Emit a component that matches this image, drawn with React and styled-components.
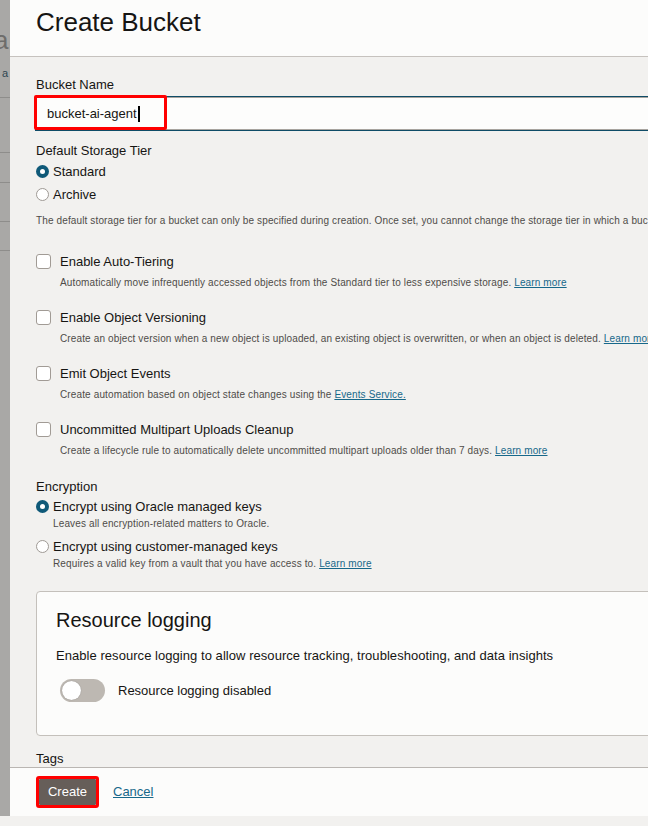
import React from "react";
import styled, { createGlobalStyle } from "styled-components";

const GlobalStyle = createGlobalStyle`
  html, body {
    margin: 0;
    padding: 0;
  }
  body {
    background: #f2f1ef;
    font-family: "Liberation Sans", Arial, sans-serif;
    color: #161513;
  }
`;

const Page = styled.div`
  width: 648px;
  height: 826px;
  overflow: hidden;
  display: flex;
  flex-direction: column;
`;

const Stage = styled.div`
  display: flex;
  height: 816px;
`;

/* page behind the drawer, dimmed by the overlay */
const Backdrop = styled.div`
  width: 10px;
  flex-shrink: 0;
  background: #a9a8a6;
  overflow: hidden;
  display: flex;
  flex-direction: column;
`;

const BackdropTitle = styled.div`
  font-size: 26px;
  line-height: 30px;
  margin: 25px 0 0 -6px;
  color: #6e6d6b;
`;

const BackdropLink = styled.div`
  font-size: 11px;
  line-height: 14px;
  margin: 11px 0 0 2px;
  color: #2f4550;
`;

const BackdropRow = styled.div`
  height: ${(p) => p.h}px;
  border-bottom: 1px solid #8e8d8b;
`;

const Drawer = styled.div`
  flex: 1;
  min-width: 0;
  display: flex;
  flex-direction: column;
  background: #f2f1ef;
`;

const Header = styled.div`
  flex-shrink: 0;
  background: #fcfcfb;
  border-bottom: 1px solid #c6c2be;
  padding: 7px 26px 0;
  box-sizing: border-box;
  height: 57px;
`;

const Title = styled.h1`
  margin: 0;
  font-size: 26px;
  line-height: 30px;
  font-weight: 400;
  color: #161513;
`;

const Body = styled.div`
  flex: 1;
  overflow: hidden;
  padding-left: 26px;
  display: flex;
  flex-direction: column;
`;

const Label = styled.div`
  font-size: 13px;
  line-height: 16px;
  margin-top: ${(p) => p.mt || 0}px;
  white-space: nowrap;
`;

const InputWrap = styled.div`
  position: relative;
  margin-top: 4px;
  width: calc(100% + 40px);
`;

const Input = styled.div`
  height: 33px;
  box-sizing: border-box;
  background: #fdfdfc;
  border: 1px solid #a8a49f;
  box-shadow: 0 0 0 1px #0f4c67;
  padding-left: 10px;
  display: flex;
  align-items: center;
  font-size: 13px;
  color: #161513;
`;

const Caret = styled.span`
  display: inline-block;
  width: 2px;
  height: 16px;
  background: #000;
  margin-left: 1px;
`;

const Highlight = styled.div`
  position: absolute;
  left: -2px;
  top: -2px;
  width: 133px;
  height: 35px;
  box-sizing: border-box;
  border: 3px solid #f00;
  border-radius: 2px;
  pointer-events: none;
`;

const RadioGroup = styled.div`
  margin-top: ${(p) => p.mt || 0}px;
  display: flex;
  flex-direction: column;
`;

const RadioRow = styled.label`
  display: flex;
  align-items: center;
  gap: 4px;
  height: ${(p) => p.h || 23}px;
  font-size: 13px;
  margin-top: ${(p) => p.mt || 0}px;
  white-space: nowrap;
`;

const RadioDot = styled.span`
  width: 13px;
  height: 13px;
  box-sizing: border-box;
  border-radius: 50%;
  flex-shrink: 0;
  background: ${(p) => (p.checked ? "#0f5978" : "#fff")};
  border: ${(p) => (p.checked ? "none" : "1px solid #9f9a95")};
  display: flex;
  align-items: center;
  justify-content: center;
  &::after {
    content: "";
    display: ${(p) => (p.checked ? "block" : "none")};
    width: 5px;
    height: 5px;
    border-radius: 50%;
    background: #fff;
  }
`;

const Hint = styled.div`
  font-size: 10px;
  letter-spacing: 0.13px;
  line-height: 14px;
  color: #4f4c49;
  white-space: nowrap;
  margin-top: ${(p) => p.mt || 0}px;
  padding-left: ${(p) => p.indent || 0}px;
`;

const Link = styled.a`
  color: #17688a;
  text-decoration: underline;
  cursor: pointer;
`;

const CheckGroup = styled.div`
  display: flex;
  flex-direction: column;
  margin-top: ${(p) => p.mt}px;
`;

const CheckRow = styled.label`
  display: flex;
  align-items: center;
  gap: 9px;
  height: 20px;
  font-size: 13px;
  white-space: nowrap;
`;

const CheckBox = styled.span`
  width: 15px;
  height: 15px;
  box-sizing: border-box;
  border: 1px solid #a19b95;
  border-radius: 3px;
  background: #fff;
  flex-shrink: 0;
`;

const Card = styled.div`
  margin-top: 20px;
  width: calc(100% + 40px);
  box-sizing: border-box;
  background: #fcfcfb;
  border: 1px solid #c4c0bb;
  border-radius: 4px;
  padding: 16px 19px 33px;
`;

const CardTitle = styled.div`
  font-size: 20px;
  line-height: 24px;
  color: #161513;
`;

const CardText = styled.div`
  font-size: 13px;
  letter-spacing: 0.05px;
  line-height: 18px;
  margin-top: 15px;
  white-space: nowrap;
`;

const SwitchRow = styled.div`
  display: flex;
  align-items: center;
  gap: 13px;
  margin: 14px 0 0 4px;
  font-size: 13px;
`;

const Track = styled.span`
  width: 45px;
  height: 23px;
  border-radius: 12px;
  background: #bdb8b2;
  display: flex;
  align-items: center;
  padding-left: 2px;
  box-sizing: border-box;
`;

const Knob = styled.span`
  width: 19px;
  height: 19px;
  border-radius: 50%;
  background: #fff;
  box-shadow: 0 0 1px rgba(0, 0, 0, 0.35);
`;

const Footer = styled.div`
  height: 49px;
  flex-shrink: 0;
  box-sizing: border-box;
  background: #fcfcfb;
  border-top: 1px solid #bab6b2;
  padding: 0 0 1px 26px;
  display: flex;
  align-items: center;
  gap: 14px;
`;

const Marked = styled.span`
  display: inline-flex;
  border: 3px solid #f00;
  border-radius: 3px;
`;

const PrimaryButton = styled.button`
  width: 57px;
  height: 26px;
  border: none;
  border-radius: 1px;
  background: #665e59;
  color: #fff;
  font-family: inherit;
  font-size: 13px;
  padding: 0;
`;

const FooterLink = styled(Link)`
  font-size: 13px;
`;

const checks = [
  {
    label: "Enable Auto-Tiering",
    hint: "Automatically move infrequently accessed objects from the Standard tier to less expensive storage. ",
    link: "Learn more",
  },
  {
    label: "Enable Object Versioning",
    hint: "Create an object version when a new object is uploaded, an existing object is overwritten, or when an object is deleted. ",
    link: "Learn more",
  },
  {
    label: "Emit Object Events",
    hint: "Create automation based on object state changes using the ",
    link: "Events Service.",
  },
  {
    label: "Uncommitted Multipart Uploads Cleanup",
    hint: "Create a lifecycle rule to automatically delete uncommitted multipart uploads older than 7 days. ",
    link: "Learn more",
  },
];

export default function App() {
  return (
    <Page>
      <GlobalStyle />
      <Stage>
        <Backdrop>
          <BackdropTitle>a</BackdropTitle>
          <BackdropLink>a</BackdropLink>
          <BackdropRow h={17} />
          <BackdropRow h={54} />
          <BackdropRow h={29} />
          <BackdropRow h={38} />
          <BackdropRow h={28} />
        </Backdrop>
        <Drawer>
          <Header>
            <Title>Create Bucket</Title>
          </Header>
          <Body>
            <Label mt={20}>Bucket Name</Label>
            <InputWrap>
              <Input>
                bucket-ai-agent
                <Caret />
              </Input>
              <Highlight />
            </InputWrap>

            <Label mt={13}>Default Storage Tier</Label>
            <RadioGroup mt={1}>
              <RadioRow>
                <RadioDot checked />
                Standard
              </RadioRow>
              <RadioRow>
                <RadioDot />
                Archive
              </RadioRow>
            </RadioGroup>
            <Hint mt={8}>
              The default storage tier for a bucket can only be specified during creation. Once set, you cannot change
              the storage tier in which a bucket resides.
            </Hint>

            {checks.map((c, i) => (
              <CheckGroup key={c.label} mt={i === 0 ? 23 : 17}>
                <CheckRow>
                  <CheckBox />
                  {c.label}
                </CheckRow>
                <Hint mt={5} indent={24}>
                  {c.hint}
                  <Link>{c.link}</Link>
                </Hint>
              </CheckGroup>
            ))}

            <Label mt={21}>Encryption</Label>
            <RadioGroup mt={1}>
              <RadioRow h={20}>
                <RadioDot checked />
                Encrypt using Oracle managed keys
              </RadioRow>
              <Hint mt={1} indent={17}>
                Leaves all encryption-related matters to Oracle.
              </Hint>
              <RadioRow h={20} mt={5}>
                <RadioDot />
                Encrypt using customer-managed keys
              </RadioRow>
              <Hint mt={1} indent={17}>
                Requires a valid key from a vault that you have access to. <Link>Learn more</Link>
              </Hint>
            </RadioGroup>

            <Card>
              <CardTitle>Resource logging</CardTitle>
              <CardText>Enable resource logging to allow resource tracking, troubleshooting, and data insights</CardText>
              <SwitchRow>
                <Track>
                  <Knob />
                </Track>
                Resource logging disabled
              </SwitchRow>
            </Card>

            <Label mt={15}>Tags</Label>
          </Body>
          <Footer>
            <Marked>
              <PrimaryButton>Create</PrimaryButton>
            </Marked>
            <FooterLink>Cancel</FooterLink>
          </Footer>
        </Drawer>
      </Stage>
    </Page>
  );
}
